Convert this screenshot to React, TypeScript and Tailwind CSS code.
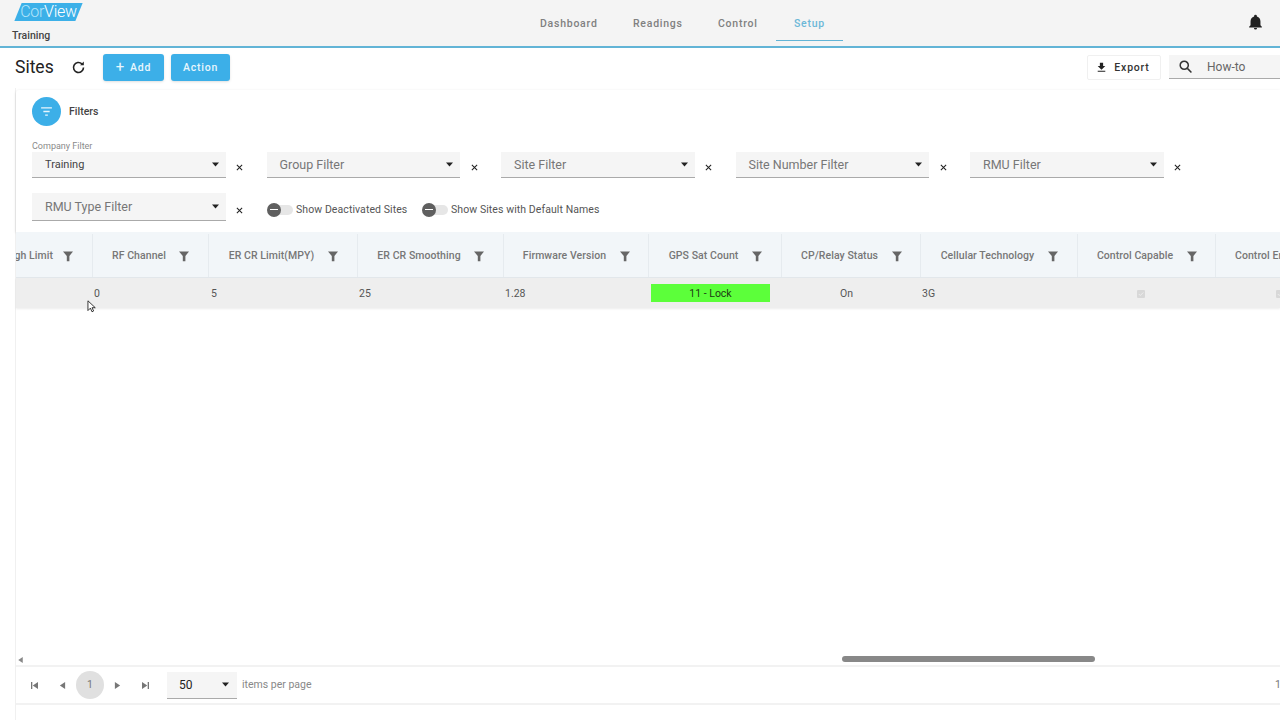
import React from "react";

const Funnel = () => (
  <svg viewBox="0 0 12 12" className="w-3 h-3 shrink-0 text-[#666]" fill="currentColor">
    <path d="M1 1.5h10L7.4 6v5.2H4.8V6z" />
  </svg>
);

const Caret = () => (
  <svg viewBox="0 0 10 6" className="w-[7px] h-[5px] shrink-0 text-[#222]" fill="currentColor">
    <path d="M0 0h10L5 6z" />
  </svg>
);

const Filter = ({ label, value, tall }: { label?: string; value: string; tall?: boolean }) => (
  <div className="flex w-[234.5px] shrink-0 items-end">
    <div className="relative w-[193.5px]">
      {label && <div className="absolute -top-[11px] left-0 text-[9px] leading-[11px] text-[#8a8a8a]">{label}</div>}
      <div className={`flex items-center justify-between border-b border-[#aaa] bg-[#f5f5f5] pl-[13px] pr-[7px] ${tall ? "h-[28px]" : "h-[26px]"}`}>
        <span className={`${label ? "text-[11px] text-[#444]" : "text-[12.5px] text-[#777]"} ${tall ? "pt-[2px]" : "pt-[1px]"}`}>{value}</span>
        <Caret />
      </div>
    </div>
    <span className="ml-[10px] flex h-[22px] w-[8px] items-center justify-center">
      <svg viewBox="0 0 8 8" className="w-[7px] h-[7px]" stroke="#222" strokeWidth="1.2"><path d="M1 1l6 6M7 1L1 7" /></svg>
    </span>
  </div>
);

const Toggle = ({ label, width }: { label: string; width: string }) => (
  <div className={`flex items-center pt-[5px] ${width}`}>
    <div className="relative h-[10px] w-[26px] shrink-0">
      <div className="absolute left-[6px] right-0 top-0 h-[10px] rounded-full bg-[#e6e6e6]" />
      <div className="absolute left-0 -top-[2px] flex h-[14px] w-[14px] items-center justify-center rounded-full bg-[#5f5f5f]">
        <div className="h-[1.5px] w-[8px] bg-white" />
      </div>
    </div>
    <span className="ml-[3.5px] text-[10.5px] tracking-[0.08px] text-[#555]">{label}</span>
  </div>
);

const columns = [
  { w: "w-[77px]", label: "High Limit", end: true },
  { w: "w-[116px]", label: "RF Channel" },
  { w: "w-[149px]", label: "ER CR Limit(MPY)" },
  { w: "w-[146px]", label: "ER CR Smoothing" },
  { w: "w-[145px]", label: "Firmware Version" },
  { w: "w-[133px]", label: "GPS Sat Count" },
  { w: "w-[139px]", label: "CP/Relay Status" },
  { w: "w-[157px]", label: "Cellular Technology" },
  { w: "w-[138px]", label: "Control Capable" },
];

const Check = () => (
  <div className="flex h-2 w-2 items-center justify-center rounded-[1px] bg-[#d8d8d8]">
    <svg viewBox="0 0 8 8" className="h-[6px] w-[6px]" fill="none" stroke="#f4f4f4" strokeWidth="1"><path d="M1 4l2 2 4-4" /></svg>
  </div>
);

const Pager = ({ d }: { d: string }) => (
  <svg viewBox="0 0 8 8" className="w-[7px] h-[7px] text-[#777]" fill="currentColor"><path d={d} /></svg>
);

export default function App() {
  return (
    <div className="flex h-[720px] w-[1280px] flex-col overflow-hidden bg-white font-['Roboto',sans-serif]">
      <header className="flex h-[48px] shrink-0 border-b-2 border-[#62b4d6] bg-[#f4f4f4]">
        <div className="w-[540px] pl-3">
          <div className="relative ml-[6px] mt-[3px] flex h-[18px] w-[61px] items-center justify-center">
            <div className="absolute inset-0 -skew-x-[22deg] bg-[#3cb0e8]" />
            <span className="relative text-[16px] font-light leading-none text-white tracking-[-0.3px]"><span className="text-[#b4e4fa]">Cor</span>View</span>
          </div>
          <div className="mt-[9px] text-[10.5px] font-medium leading-[12px] text-[#444]">Training</div>
        </div>
        <nav className="flex text-[10.5px] font-medium tracking-[0.75px] text-[#808080]">
          <a className="flex h-[46px] w-[93px] items-center pt-[2px]">Dashboard</a>
          <a className="flex h-[46px] w-[85px] items-center pt-[2px]">Readings</a>
          <a className="flex h-[46px] w-[58px] items-center pt-[2px]">Control</a>
          <a className="flex h-[41px] w-[67px] items-center justify-center border-b border-[#62b4d6] pt-[7px] text-[#6cb8d8]">Setup</a>
        </nav>
        <div className="flex flex-1 items-center justify-end pr-[16px] pb-[2px]">
          <svg viewBox="0 0 24 24" className="h-[17px] w-[17px] text-[#222]" fill="currentColor">
            <path d="M12 22a2.2 2.2 0 0 0 2.2-2.2H9.8A2.2 2.2 0 0 0 12 22zm7-6v-5.5c0-3.4-1.8-6.2-5-7V3a2 2 0 0 0-4 0v.5c-3.2.8-5 3.6-5 7V16l-2 2v1h18v-1z" />
          </svg>
        </div>
      </header>

      <div className="flex h-[40px] shrink-0 items-center pb-[2px] pl-[15px]">
        <h1 className="w-[56px] pt-[2px] text-[17.5px] leading-none text-[#222]">Sites</h1>
        <svg viewBox="0 0 24 24" className="h-[15px] w-[15px] text-[#222]" fill="none" stroke="currentColor" strokeWidth="2.6">
          <path d="M20 12a8 8 0 1 1-2.6-5.9" />
          <path d="M20.5 2.5v6h-6" fill="currentColor" stroke="none" />
        </svg>
        <button className="ml-[17px] flex h-[27px] w-[61px] items-center justify-center gap-[5px] rounded-[3px] bg-[#3cafe8] pt-[1px] text-[10.5px] font-medium tracking-[0.8px] text-[#e8f6fd] shadow-sm">
          <span className="text-[15px] font-normal leading-none">+</span>Add
        </button>
        <button className="ml-[7px] flex h-[27px] w-[59px] items-center justify-center rounded-[3px] bg-[#3cafe8] pt-[1px] text-[10.5px] font-medium tracking-[0.8px] text-[#e8f6fd] shadow-sm">Action</button>
        <div className="flex-1" />
        <button className="flex h-[25px] w-[74px] items-center justify-center gap-[6px] rounded-[2px] border border-[#f0f0f0] bg-white pr-[3px] pt-[1px] text-[10.5px] font-medium tracking-[0.8px] text-[#333]">
          <svg viewBox="0 0 24 24" className="h-[13px] w-[13px] text-[#222]" fill="currentColor"><path d="M19 9h-4V3H9v6H5l7 7zM5 18v2h14v-2z" /></svg>
          Export
        </button>
        <div className="ml-2 flex h-[24px] w-[111px] items-center border-b border-[#aaa] bg-[#f5f5f5] pl-[9px]">
          <svg viewBox="0 0 24 24" className="h-[15px] w-[15px] text-[#333]" fill="none" stroke="currentColor" strokeWidth="2.4"><circle cx="10" cy="10" r="6.5" /><path d="M15 15l6.5 6.5" /></svg>
          <span className="ml-[14px] text-[12px] text-[#666]">How-to</span>
        </div>
      </div>

      <div className="ml-[15px] flex flex-1 flex-col border-l border-[#f0f0f0]">
        <section className="mt-[2px] h-[142px] shrink-0 rounded-tl-[3px] bg-white pl-[16px] shadow-[0_1px_3px_rgba(0,0,0,0.15)]">
          <div className="flex items-center pt-[7px]">
            <div className="flex h-[29px] w-[29px] items-center justify-center rounded-full bg-[#3cafe8]">
              <svg viewBox="0 0 14 10" className="h-[9px] w-[13px]" stroke="#e8f6fd" strokeWidth="1.4"><path d="M1 1h12M3.5 5h7M5.5 9h3" /></svg>
            </div>
            <span className="ml-[8px] pt-[1px] text-[10.5px] font-medium text-[#444]">Filters</span>
          </div>
          <div className="mt-[26px] flex">
            <Filter label="Company Filter" value="Training" />
            <Filter value="Group Filter" />
            <Filter value="Site Filter" />
            <Filter value="Site Number Filter" />
            <Filter value="RMU Filter" />
          </div>
          <div className="mt-[15px] flex items-center">
            <Filter value="RMU Type Filter" tall />
            <Toggle label="Show Deactivated Sites" width="w-[155px]" />
            <Toggle label="Show Sites with Default Names" width="" />
          </div>
        </section>

        <div className="flex h-[46px] shrink-0 border-b border-[#e3e8ec] bg-[#f2f6f9] pt-[2px] text-[10.5px] font-medium tracking-[0.06px] text-[#777]">
          {columns.map((c) => (
            <div key={c.label} className={`${c.w} flex shrink-0 items-center overflow-hidden border-r border-[#e6ebef] ${c.end ? "justify-end gap-[9px] pr-[18px]" : "justify-center gap-[12.5px] pl-[1.5px]"}`}>
              <span className="whitespace-nowrap">{c.label}</span>
              <Funnel />
            </div>
          ))}
          <div className="flex flex-1 items-center overflow-hidden pl-[19px]"><span className="whitespace-nowrap">Control Enabled</span></div>
        </div>

        <div className="relative flex h-[30px] shrink-0 items-center bg-[#eeeeee] pt-[1px] text-[10.5px] text-[#555] shadow-[0_1px_2px_rgba(0,0,0,0.08)]">
          <div className="w-[77px] shrink-0" />
          <div className="w-[116px] shrink-0 pl-[1px]">0</div>
          <div className="w-[149px] shrink-0 pl-[2px]">5</div>
          <div className="w-[146px] shrink-0 pl-[1px]">25</div>
          <div className="w-[145px] shrink-0 pl-[1px]">1.28</div>
          <div className="w-[133px] shrink-0 pl-[2px]">
            <div className="-mt-[1px] flex h-[18px] w-[119px] items-center justify-center bg-[#5cff3a] pt-[1px] text-[#1c3a14]">11 - Lock</div>
          </div>
          <div className="w-[139px] shrink-0 pl-[58px]">On</div>
          <div className="w-[157px] shrink-0 pl-[1px]">3G</div>
          <div className="flex w-[138px] shrink-0 justify-center pr-[12px]"><Check /></div>
          <div className="flex-1 pl-[60px]"><Check /></div>
          <svg viewBox="0 0 12 16" className="absolute left-[71px] top-[22px] h-[13px] w-[10px]" fill="#fff" stroke="#222" strokeWidth="1.1">
            <path d="M1 1v12l3-3 2 4.5 2-1-2-4h4z" />
          </svg>
        </div>

        <div className="flex-1" />

        <div className="relative h-[11px] shrink-0 border-b-2 border-[#f2f2f2]">
          <svg viewBox="0 0 6 8" className="absolute left-[2px] top-[1px] h-[6px] w-[5px] text-[#888]" fill="currentColor"><path d="M6 0v8L0 4z" /></svg>
          <div className="absolute left-[826px] top-0 h-[6px] w-[253px] rounded-full bg-[#888]" />
        </div>

        <footer className="flex h-[38px] shrink-0 items-center border-b-2 border-[#f2f2f2] pl-[15px]">
          <div className="flex w-[16px] justify-start"><Pager d="M0 0h1.5v8H0zM8 0v8L2 4z" /></div>
          <div className="ml-[12px] w-[12px]"><Pager d="M7 0v8L1 4z" /></div>
          <div className="ml-[5px] flex h-[28px] w-[28px] items-center justify-center rounded-full bg-[#e0e0e0] text-[10.5px] text-[#777]">1</div>
          <div className="ml-[10px] w-[21px]"><Pager d="M1 0v8l6-4z" /></div>
          <div className="ml-[7px] w-[21px]"><Pager d="M6.5 0H8v8H6.5zM0 0v8l6-4z" /></div>
          <div className="ml-[4px] flex h-[27px] w-[70px] items-center justify-between border-b border-[#aaa] bg-[#f5f5f5] pl-3 pr-2">
            <span className="text-[12px] text-[#222]">50</span>
            <Caret />
          </div>
          <span className="ml-[5px] text-[10.5px] text-[#888]">items per page</span>
          <span className="ml-auto w-[5px] overflow-hidden text-[10.5px] text-[#777]">1</span>
        </footer>
        <div className="h-[15px] shrink-0" />
      </div>
    </div>
  );
}
